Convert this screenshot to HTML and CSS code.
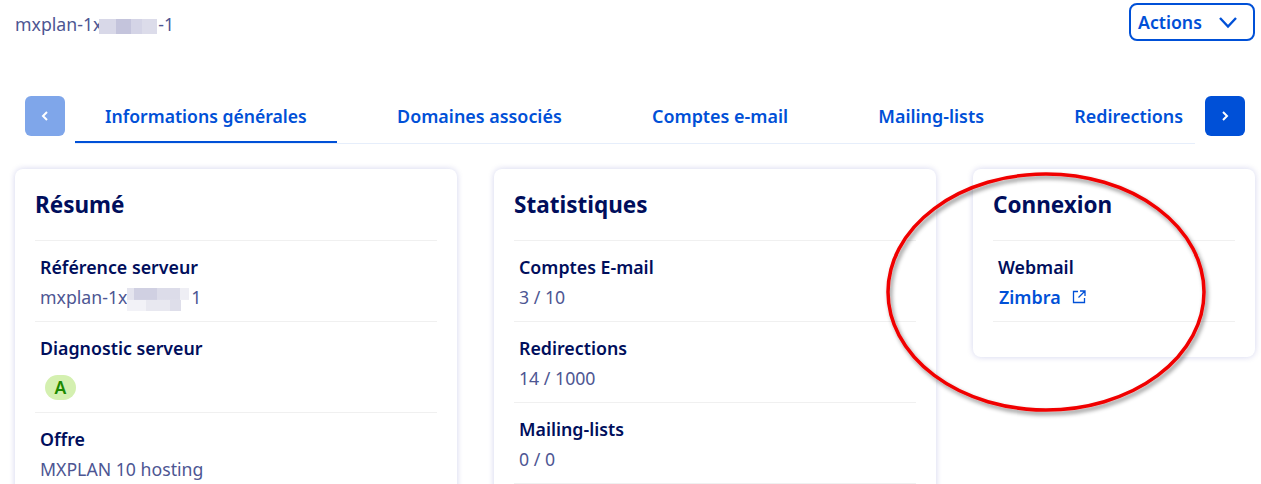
FILE: index.html
```html
<!DOCTYPE html>
<html lang="fr">
<head>
  <meta charset="UTF-8">
  <title>mxplan</title>
  <link rel="stylesheet" href="styles.css">
</head>
<body>

  <!-- en-tete -->
  <header class="top-bar">
    <div class="service-name">mxplan-1x<span class="blur blur-top"></span>-1</div>
    <button class="actions-btn">
      Actions
      <svg class="actions-icon" width="20" height="13" viewBox="0 0 20 13"><path d="M2 2l8 8.5L18 2" fill="none" stroke="#0050d7" stroke-width="2.4"/></svg>
    </button>
  </header>

  <!-- onglets -->
  <nav class="tabs">
    <button class="tab-arrow tab-arrow-off">
      <svg width="8" height="12" viewBox="0 0 8 12"><path d="M6 2L2 6l4 4" fill="none" stroke="#fff" stroke-width="2"/></svg>
    </button>
    <ul class="tab-list">
      <li class="tab tab-active">Informations générales</li>
      <li class="tab">Domaines associés</li>
      <li class="tab">Comptes e-mail</li>
      <li class="tab">Mailing-lists</li>
      <li class="tab">Redirections</li>
    </ul>
    <button class="tab-arrow">
      <svg width="8" height="12" viewBox="0 0 8 12"><path d="M2 2l4 4-4 4" fill="none" stroke="#fff" stroke-width="2"/></svg>
    </button>
  </nav>

  <main class="cards">
    <section class="card">
      <h2>Résumé</h2>
      <div class="row">
        <div class="label">Référence serveur</div>
        <div class="value">mxplan-1x<span class="blur blur-ref"></span>1</div>
      </div>
      <div class="row">
        <div class="label">Diagnostic serveur</div>
        <div class="value value-badge"><span class="badge">A</span></div>
      </div>
      <div class="row">
        <div class="label">Offre</div>
        <div class="value">MXPLAN 10 hosting</div>
      </div>
    </section>

    <section class="card">
      <h2>Statistiques</h2>
      <div class="row">
        <div class="label">Comptes E-mail</div>
        <div class="value">3 / 10</div>
      </div>
      <div class="row">
        <div class="label">Redirections</div>
        <div class="value">14 / 1000</div>
      </div>
      <div class="row">
        <div class="label">Mailing-lists</div>
        <div class="value">0 / 0</div>
      </div>
    </section>

    <section class="card card-small">
      <h2>Connexion</h2>
      <div class="row">
        <div class="label">Webmail</div>
        <div class="value">
          <a class="link" href="#">Zimbra
            <svg class="link-icon" width="14" height="14" viewBox="0 0 14 14"><path d="M6 1.5H1.5v11h11V8M8 1h5v5M13 1L6.5 7.5" fill="none" stroke="#0050d7" stroke-width="1.3"/></svg>
          </a>
        </div>
      </div>
    </section>
  </main>

  <!-- annotation rouge -->
  <svg class="circle-mark" width="340" height="260" viewBox="0 0 340 260">
    <defs>
      <filter id="markShadow" x="-10%" y="-10%" width="120%" height="120%">
        <feDropShadow dx="2" dy="3" stdDeviation="2" flood-color="#000" flood-opacity="0.45"/>
      </filter>
    </defs>
    <ellipse cx="166" cy="126" rx="158" ry="118" fill="none" stroke="#f00000" stroke-width="3.5" filter="url(#markShadow)"/>
  </svg>

</body>
</html>
```

FILE: styles.css
```css
* {
  box-sizing: border-box;
}

html, body {
  height: 484px;
  overflow: hidden;
}

body {
  position: relative;
  margin: 0;
  padding: 3px 6px 0 15px;
  background-color: #fff;
  color: #4d5693;
  font-family: "Noto Sans", sans-serif;
  font-size: 17.7px;
}

.top-bar {
  display: flex;
  justify-content: space-between;
  align-items: flex-start;
  height: 93px;
}

.service-name {
  margin-top: 9px;
  line-height: 24px;
}

.blur {
  display: inline-block;
  vertical-align: middle;
}

.blur-top {
  width: 58px;
  height: 15px;
  margin: 0 1px 0 -3px;
  background: linear-gradient(90deg, #d8d8e8 0 30%, #c4c4dc 30% 55%, #d4d4e6 55% 75%, #dcdcea 75%);
}

.blur-ref {
  width: 62px;
  height: 23px;
  margin-right: 2px;
  background:
    linear-gradient(90deg, #e4e4ee 0 12%, #d0d0e2 12% 48%, #dcdce9 48% 85%, #eeeef4 85%) top / 100% 52% no-repeat,
    linear-gradient(90deg, #f2f2f7 0 30%, #e8e8f0 30% 70%, #dedeea 70% 87%, #fff 87%) bottom / 100% 48% no-repeat;
}

.actions-btn {
  display: flex;
  align-items: center;
  justify-content: space-between;
  width: 126px;
  height: 38px;
  padding: 0 15px 0 7px;
  border: 2px solid #0050d7;
  border-radius: 8px;
  background: #fff;
  color: #0050d7;
  font-family: inherit;
  font-size: 17.7px;
  font-weight: 600;
}

.tabs {
  display: flex;
  align-items: flex-start;
  margin: 0 10px 0 10px;
}

.tab-arrow {
  display: flex;
  align-items: center;
  justify-content: center;
  flex: none;
  width: 40px;
  height: 40px;
  padding: 0;
  border: none;
  border-radius: 6px;
  background-color: #0050d7;
}

.tab-arrow-off {
  background-color: #7fa6ea;
}

.tab-list {
  display: flex;
  flex: 1;
  justify-content: space-between;
  height: 48px;
  margin: 0 10px;
  padding: 0;
  border-bottom: 1px solid #e6eefb;
  list-style: none;
}

.tab {
  height: 47px;
  padding: 8px 30px 0;
  line-height: 24px;
  color: #0050d7;
  font-size: 17.9px;
  font-weight: 600;
  white-space: nowrap;
}

.tab:last-child {
  padding-right: 12px;
}

.tab-active {
  border-bottom: 2px solid #0050d7;
  font-size: 17.6px;
}

/* la page continue plus bas, on coupe au bord de la fenetre */
.cards {
  display: flex;
  align-items: flex-start;
  gap: 37px;
  height: 321px;
  margin: 19px -6px 0;
  padding: 6px 6px 0;
  overflow: hidden;
}

.card {
  flex: none;
  width: 442px;
  height: 340px;
  padding: 16px 20px 0;
  border-radius: 8px;
  background: #fff;
  box-shadow: 0 0 6px rgba(0, 14, 156, 0.18);
}

.card-small {
  width: 282px;
  height: auto;
  padding-bottom: 35px;
}

h2 {
  height: 56px;
  margin: 0;
  border-bottom: 1px solid #f0f0f0;
  color: #000e5c;
  font-size: 22.5px;
  font-weight: 700;
  line-height: 40px;
}

.row {
  padding: 14px 5px 11px;
  border-bottom: 1px solid #f0f0f0;
}

.label {
  color: #000e5c;
  font-size: 17.8px;
  font-weight: 600;
  line-height: 25px;
}

.value {
  height: 25px;
  margin-top: 5px;
  line-height: 25px;
}

.value-badge {
  height: 35px;
  padding-top: 9px;
}

.badge {
  display: block;
  margin-left: 5px;
  width: 31px;
  height: 25px;
  border-radius: 13px;
  background-color: #d4f0b0;
  color: #1c8a00;
  font-size: 17.5px;
  font-weight: 600;
  text-align: center;
}

.link {
  margin-left: 1px;
  color: #0050d7;
  font-size: 17.9px;
  font-weight: 600;
  text-decoration: none;
}

.link-icon {
  margin-left: 7px;
}

.circle-mark {
  position: absolute;
  left: 880px;
  top: 166px;
}
```
